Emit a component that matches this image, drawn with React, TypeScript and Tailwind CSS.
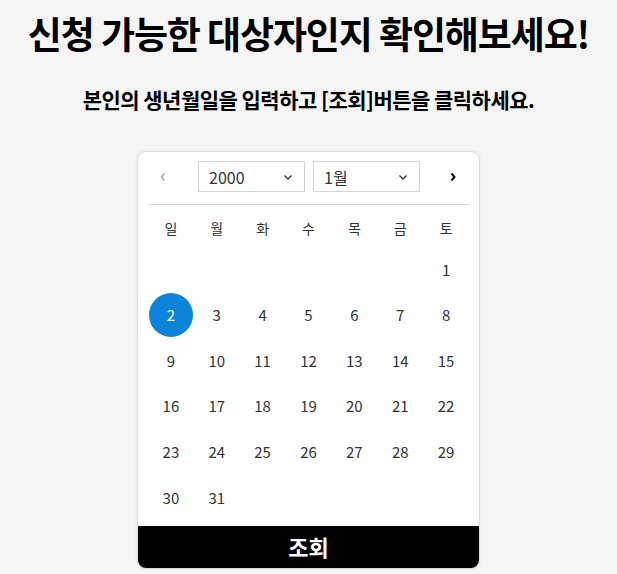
import React from "react";

const days: (number | null)[] = [null, null, null, null, null, null, 1];
for (let d = 2; d <= 31; d++) days.push(d);
while (days.length % 7 !== 0) days.push(null);

function Chevron() {
  return (
    <svg width="12" height="12" viewBox="0 0 12 12" fill="none">
      <path d="M2.5 4.5L6 8L9.5 4.5" stroke="#333" strokeWidth="1.3" />
    </svg>
  );
}

export default function App() {
  return (
    <div
      className="min-h-[574px] w-full bg-[#f5f5f5] flex flex-col items-center"
      style={{ fontFamily: '"Noto Sans CJK KR", "Noto Sans", sans-serif' }}
    >
      <h1 className="mt-[7px] text-[37px] leading-[52px] font-bold text-black tracking-[-0.03em]">
        신청 가능한 대상자인지 확인해보세요!
      </h1>
      <p className="mt-[25px] text-[21px] leading-[30px] font-bold text-black tracking-[-0.025em]">
        본인의 생년월일을 입력하고 [조회]버튼을 클릭하세요.
      </p>
      <div className="mt-[37px] w-[343px] rounded-[9px] border border-[#dcdcdc] bg-white overflow-hidden shadow-[0_0_4px_rgba(0,0,0,0.06)]">
        <div className="px-[10px]">
          <div className="flex items-center pt-[9px] pb-[12px] border-b border-[#d8d8d8]">
            <div className="w-[50px] flex justify-start pl-[10px]">
              <svg width="10" height="10" viewBox="0 0 10 10" fill="none">
                <path d="M6.5 1.5L3.5 5L6.5 8.5" stroke="#aaa" strokeWidth="1.6" />
              </svg>
            </div>
            <div className="w-[107px] h-[31px] border border-[#d6d6d6] flex items-center justify-between pl-[10px] pr-[10px] text-[16px] text-[#333]">
              <span>2000</span>
              <Chevron />
            </div>
            <div className="w-[8px]" />
            <div className="w-[107px] h-[31px] border border-[#d6d6d6] flex items-center justify-between pl-[10px] pr-[10px] text-[16px] text-[#333]">
              <span>1월</span>
              <Chevron />
            </div>
            <div className="flex-1 flex justify-end pr-[11px]">
              <svg width="10" height="10" viewBox="0 0 10 10" fill="none">
                <path d="M3.5 1.5L6.5 5L3.5 8.5" stroke="#111" strokeWidth="2" />
              </svg>
            </div>
          </div>
          <div className="grid grid-cols-7 h-[46px] items-center text-[14px] text-[#333]">
            {["일", "월", "화", "수", "목", "금", "토"].map((w) => (
              <div key={w} className="text-center">
                {w}
              </div>
            ))}
          </div>
          <div className="grid grid-cols-7 -mt-[4px] pb-[5px]">
            {days.map((d, i) => (
              <div key={i} className="h-[45.6px] flex items-center justify-center">
                {d !== null && (
                  <div
                    className={
                      d === 2
                        ? "w-[44px] h-[44px] rounded-full bg-[#0a84d8] text-white flex items-center justify-center text-[15px]"
                        : "text-[15px] text-[#333]"
                    }
                  >
                    {d}
                  </div>
                )}
              </div>
            ))}
          </div>
        </div>
        <button className="w-full h-[42px] bg-black text-white text-[22px] font-bold flex items-center justify-center">
          조회
        </button>
      </div>
    </div>
  );
}
